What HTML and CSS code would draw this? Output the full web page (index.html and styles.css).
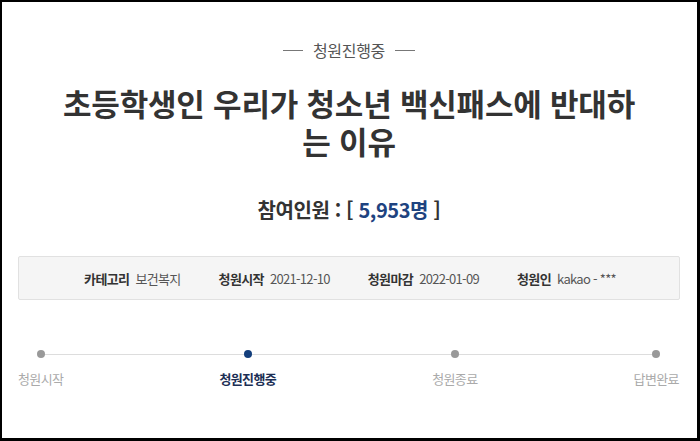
FILE: index.html
```html
<!DOCTYPE html>
<html lang="ko">
<head>
<meta charset="utf-8">
<link rel="stylesheet" href="styles.css">
</head>
<body>
<div class="frame">
  <div class="status"><span class="dash"></span><span class="status-text">청원진행중</span><span class="dash"></span></div>
  <h1 class="title">초등학생인 우리가 청소년 백신패스에 반대하<br>는 이유</h1>
  <div class="count">참여인원 : [ <span class="num">5,953명</span> ]</div>
  <div class="info">
    <div class="item"><span class="label">카테고리</span><span class="value">보건복지</span></div>
    <div class="item"><span class="label">청원시작</span><span class="value">2021-12-10</span></div>
    <div class="item"><span class="label">청원마감</span><span class="value">2022-01-09</span></div>
    <div class="item"><span class="label">청원인</span><span class="value">kakao - ***</span></div>
  </div>
  <div class="progress">
    <div class="step"><span class="dot"></span><span class="step-label">청원시작</span></div>
    <div class="step active"><span class="dot"></span><span class="step-label">청원진행중</span></div>
    <div class="step"><span class="dot"></span><span class="step-label">청원종료</span></div>
    <div class="step"><span class="dot"></span><span class="step-label">답변완료</span></div>
  </div>
</div>
</body>
</html>
```
FILE: styles.css
```css
html, body {
  margin: 0;
  padding: 0;
  background: #000;
}
.frame {
  box-sizing: border-box;
  width: 700px;
  height: 441px;
  background: #fff;
  border-style: solid;
  border-color: #000;
  border-width: 2px 3px 3px 2px;
  padding: 38px 17px 0 16px;
  font-family: "Noto Sans CJK KR", "Noto Sans", sans-serif;
  color: #333;
  display: flex;
  flex-direction: column;
  align-items: stretch;
}
.status {
  display: flex;
  justify-content: center;
  align-items: center;
  gap: 10px;
  height: 20px;
}
.dash {
  display: block;
  width: 20px;
  height: 1px;
  background: #777;
}
.status-text {
  font-size: 16px;
  line-height: 20px;
  color: #555;
  letter-spacing: -0.3px;
}
.title {
  margin: 24px 0 0;
  font-size: 31px;
  line-height: 38px;
  font-weight: 700;
  text-align: center;
  letter-spacing: -0.2px;
  color: #333;
}
.count {
  margin-top: 37px;
  text-align: center;
  font-size: 20px;
  line-height: 26px;
  font-weight: 700;
  color: #333;
  letter-spacing: -0.4px;
}
.num {
  color: #1e4380;
}
.info {
  margin-top: 33px;
  height: 44px;
  box-sizing: border-box;
  background: #f5f5f5;
  border: 1px solid #e1e1e1;
  border-radius: 2px;
  display: flex;
  justify-content: center;
  align-items: center;
  gap: 38px;
  font-size: 13px;
  padding-left: 2px;
}
.item {
  display: flex;
  align-items: baseline;
  gap: 6px;
}
.label {
  font-weight: 700;
  color: #333;
  letter-spacing: -0.6px;
}
.value {
  color: #555;
  letter-spacing: -0.7px;
}
.progress {
  position: relative;
  margin-top: 50px;
  display: flex;
  justify-content: space-between;
  padding-right: 1px;
}
.progress::before {
  content: "";
  position: absolute;
  left: 22px;
  right: 23px;
  top: 4px;
  height: 1px;
  background: #ddd;
}
.step {
  display: flex;
  flex-direction: column;
  align-items: center;
  gap: 12px;
  position: relative;
}
.dot {
  width: 8px;
  height: 8px;
  border-radius: 50%;
  background: #999;
}
.step-label {
  font-size: 13px;
  line-height: 18px;
  color: #aaa;
  letter-spacing: -0.6px;
}
.step.active .dot {
  background: #133e7c;
}
.step.active .step-label {
  color: #1c2f55;
  font-weight: 700;
}
```
